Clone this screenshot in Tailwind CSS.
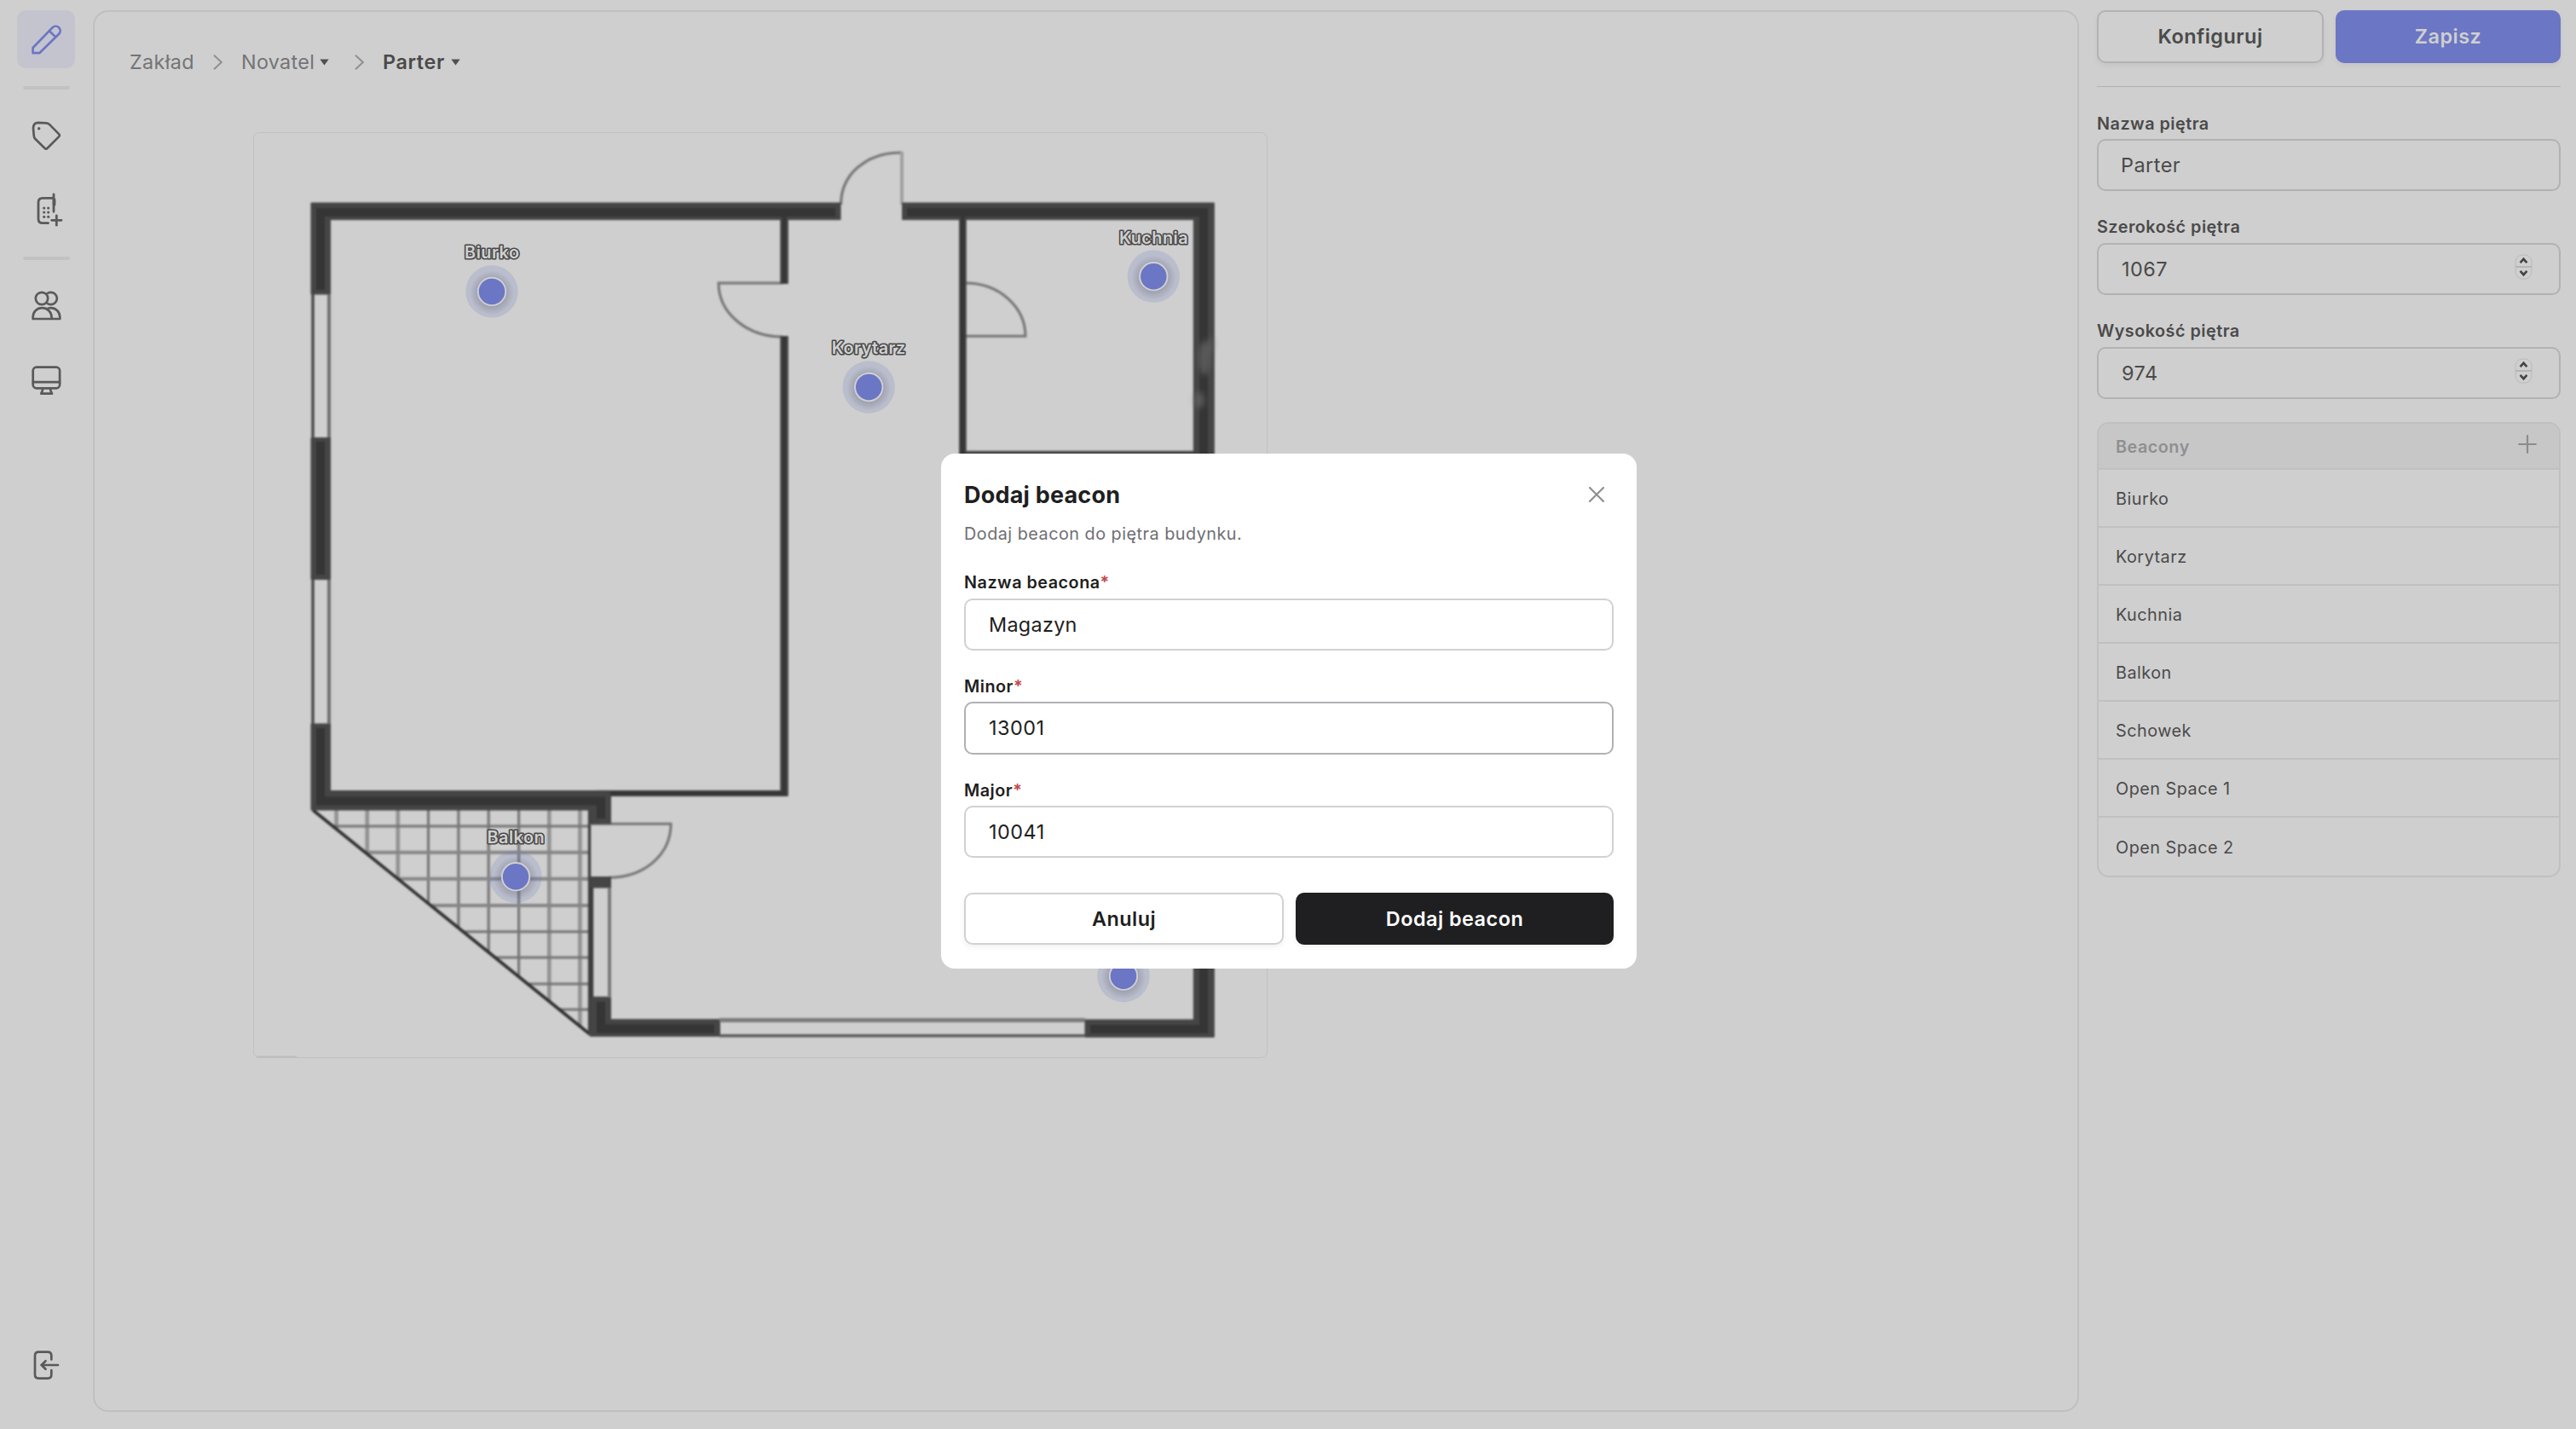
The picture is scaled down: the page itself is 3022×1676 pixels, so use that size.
<!DOCTYPE html>
<html lang="pl">
<head>
<meta charset="utf-8">
<title>Parter</title>
<script src="https://cdn.jsdelivr.net/npm/@tailwindcss/browser@4"></script>
</head>
<body class="relative flex h-[1676px] w-[3022px] overflow-hidden bg-[#cfcfcf] font-['Inter',sans-serif] text-[19.8px] tracking-[0.5px] text-[#4a4a4a]">

<!-- Sidebar -->
<nav class="mr-px flex w-[108px] shrink-0 flex-col items-center pt-3 pb-[41px] text-[#5a5a5a]">
  <a class="flex size-[68px] items-center justify-center rounded-[10px] bg-[#c4c4cf] text-[#6b76c4]">
    <svg class="size-9" viewBox="0 0 36 36" fill="none" stroke="currentColor" stroke-width="2.7" stroke-linejoin="round" stroke-linecap="round"><path d="M2.6 34.2V28L25.5 4.4a5.3 5.3 0 0 1 7.7 7.3L10.3 34.2Z"/><path d="M21.8 8.2l7.4 7.2"/></svg>
  </a>
  <div class="mt-[21px] h-1 w-[55px] rounded-full bg-[#c2c2c2]"></div>
  <a class="mt-5 flex size-[68px] items-center justify-center">
    <svg class="size-9" viewBox="0 0 36 36" fill="none" stroke="currentColor" stroke-width="2.7" stroke-linejoin="round"><path d="M9 2.8L18.5 3.4Q20.8 3.7 22.2 5.1L33 16.1Q34.6 17.8 33 19.4L19.6 32.8Q18 34.4 16.4 32.8L5.4 22Q4 20.6 3.8 18.4L3 9.6Q2.9 2.9 9 2.8Z"/><circle cx="9.7" cy="9.7" r="1.7" fill="currentColor" stroke="none"/></svg>
  </a>
  <a class="mt-[19px] flex size-[68px] items-center justify-center">
    <svg class="ml-[3px] h-10 w-9" viewBox="0 0 36 40" fill="none" stroke="currentColor" stroke-width="2.8" stroke-linecap="round"><path d="M24 6.3H12Q7 6.3 7 11.3V30.7Q7 35.7 12 35.7H18.5M25 2V22.3M28.3 26.8v11.4M22.6 32.3h11.4"/><path d="M25.6 8v6" stroke-width="3.6"/><g fill="currentColor" stroke="none"><circle cx="13.7" cy="18" r="1.6"/><circle cx="18.7" cy="18" r="1.6"/><circle cx="13.7" cy="23" r="1.6"/><circle cx="18.7" cy="23" r="1.6"/><circle cx="13.7" cy="28.3" r="1.6"/><circle cx="18.7" cy="28.3" r="1.6"/></g></svg>
  </a>
  <div class="mt-[21px] h-1 w-[55px] rounded-full bg-[#c2c2c2]"></div>
  <a class="mt-[19px] flex size-[68px] items-center justify-center">
    <svg class="size-9" viewBox="0 0 36 36" fill="none" stroke="currentColor" stroke-width="2.7" stroke-linejoin="round"><circle cx="13" cy="10" r="7.2"/><path d="M19 4.5A7.2 7.2 0 1 1 19 15.5"/><path d="M2.6 34V32C2.6 25.5 7.3 21.2 13.4 21.2S24.4 25.5 24.6 32V34Z"/><path d="M18.8 22.6C20.2 21.6 21.8 21.2 23.4 21.2C29.6 21.2 34.2 25.5 34.3 32V34H24.6"/></svg>
  </a>
  <a class="mt-5 flex size-[68px] items-center justify-center">
    <svg class="size-9" viewBox="0 0 36 36" fill="none" stroke="currentColor" stroke-width="2.7" stroke-linejoin="round" stroke-linecap="round"><rect x="2.7" y="2.7" width="31.4" height="24.6" rx="4"/><path d="M2.7 20.2H34.1M14.2 27.5C14.2 30 13.6 31.6 12.2 33.7H25C23.6 31.6 23 30 23 27.5"/></svg>
  </a>
  <a class="mt-auto flex size-[68px] items-center justify-center">
    <svg class="size-9" viewBox="0 0 36 36" fill="none" stroke="currentColor" stroke-width="2.7" stroke-linejoin="round" stroke-linecap="round"><path d="M24.3 11.5V7Q24.3 2.7 20 2.7H9.3Q5 2.7 5 7V29.3Q5 33.6 9.3 33.6H20Q24.3 33.6 24.3 29.3V24M32 18H12.5M17.5 13.2L12.7 18L17.5 22.8"/></svg>
  </a>
</nav>

<!-- Floor canvas -->
<main class="relative mt-3 h-[1644px] w-[2330px] shrink-0 rounded-[18px] border-2 border-[#c0c0c0]">
  <div class="flex items-center pt-[44px] pl-[41px] text-[23.4px] leading-[30px] text-[#747476]">
    <span class="w-[98px] tracking-[0.35px]">Zakład</span>
    <svg class="h-[18px] w-[11px]" viewBox="0 0 11 18" fill="none" stroke="#8f8f92" stroke-width="2"><path d="M1 .8L9.8 9L1 17.2"/></svg>
    <span class="ml-[22px] w-[92px] tracking-[0.3px]">Novatel</span>
    <svg class="h-2 w-[11px]" viewBox="0 0 11 8" fill="#505050"><path d="M.3.6H10.7L5.5 7.6Z"/></svg>
    <svg class="ml-[30px] h-[18px] w-[11px]" viewBox="0 0 11 18" fill="none" stroke="#8f8f92" stroke-width="2"><path d="M1 .8L9.8 9L1 17.2"/></svg>
    <span class="ml-[22px] w-[80px] font-semibold tracking-[0.6px] text-[#4a4a4a]">Parter</span>
    <svg class="h-2 w-[11px]" viewBox="0 0 11 8" fill="#505050"><path d="M.3.6H10.7L5.5 7.6Z"/></svg>
  </div>

  <!-- Plan: user units are page pixels -->
  <svg class="absolute top-[141px] left-[186px] h-[1086px] w-[1190px]" viewBox="297 155 1190 1086">
    <defs>
      <clipPath id="balcony"><path d="M366 950L692 1213V950Z"/></clipPath>
    </defs>
    <rect x="297.5" y="155.5" width="1189" height="1085" rx="7" fill="none" stroke="#c0c0c0"/>
    <path d="M301 1239.3H348" stroke="#bcbcbc" stroke-width="1.5"/>
    <g class="blur-[1.1px]">
      <g clip-path="url(#balcony)" fill="none" stroke="#8a8a8a" stroke-width="4">
        <path d="M394.6 950V1215M430.7 950V1215M466.8 950V1215M644.3 950V1215M680.4 950V1215" stroke-width="4.6" stroke="#929292"/>
        <path d="M502.5 950V1215M537.9 950V1215M573.2 950V1215M608.6 950V1215" stroke="#787878" stroke-width="3.2"/>
        <path d="M366 999.7H692M366 1030.7H692M366 1062H692" stroke="#868686" stroke-width="4"/>
        <path d="M366 969H692M366 1092.7H692M366 1123H692M366 1154H692M366 1184H692" stroke="#757575" stroke-width="3"/>
      </g>
      <path d="M367 950L692 1213" stroke="#303030" stroke-width="3.6"/>
      <path d="M691.5 950V1213" stroke="#404040" stroke-width="3.4"/>
      <!-- door leaves and swings -->
      <g fill="none" stroke="#757575" stroke-width="3">
        <path d="M918 332H843C843 368 877 395 918 395"/>
        <path d="M986.5 240C986.5 205 1015 179 1058 179" stroke-width="3.2"/>
        <path d="M1058 178V240" stroke="#a0a0a0" stroke-width="4"/>
        <path d="M1133 394.3H1203C1203 360 1172 332 1133 332"/>
        <path d="M692 966.3H787C787 1003 755 1029.3 714 1029.3"/>
      </g>
      <!-- exterior and partition walls -->
      <g fill="#454545" stroke="#454545" stroke-width="1">
        <path d="M365 238H986V257.6H387.6V345H365Z"/>
        <path d="M1058.6 238H1424.3V1216.3H1273V1196H1400.3V257.6H1058.6Z"/>
        <path d="M365 513.5H387.6V679.5H365Z"/>
        <path d="M365 849H387.6V927.5H716.4V966H692V950H365Z"/>
        <path d="M692 1028.5H716.4V1041H692Z"/>
        <path d="M692 1169.3H716.4V1195.7H844.5V1215.3H692Z"/>
        <path d="M915.8 250H924.3V332.5H915.8ZM915.8 394.5H924.3V933.6H700V927.4H915.8Z"/>
        <path d="M1125.6 250H1133.2V540H1125.6ZM1130 529.3H1402V536H1130Z"/>
      </g>
      <g fill="none" stroke="#353535" stroke-width="10">
        <path d="M980 249H376V340M1064 249H1412V1207H1279M376 518V674M376 854V939.5H705V960M705 1175V1206.5H838" stroke-linejoin="miter"/>
        <path d="M920 250V332M920 395V930.5H716M1129.4 250V540" stroke-width="4.5"/>
      </g>
      <!-- windows -->
      <g fill="none">
        <path d="M367 345V513M367 680V849" stroke="#484848" stroke-width="3.4"/>
        <path d="M386 345V513M386 680V849" stroke="#707070" stroke-width="4"/>
        <path d="M694 1041V1170" stroke="#3e3e3e" stroke-width="4.4"/>
        <path d="M715 1041V1170" stroke="#7a7a7a" stroke-width="4"/>
        <path d="M844 1196.6H1273" stroke="#7c7c7c" stroke-width="5"/>
        <path d="M844 1214.8H1273" stroke="#5c5c5c" stroke-width="3.6"/>
      </g>
      <g class="blur-[3px]" fill="#6a6a6a">
        <ellipse cx="1413" cy="420" rx="7" ry="20" opacity=".7"/>
        <ellipse cx="1420" cy="404" rx="4" ry="10" opacity=".4"/>
        <ellipse cx="1407" cy="469" rx="6" ry="10" opacity=".65"/>
      </g>
    </g>

    <defs>
      <radialGradient id="shade"><stop offset=".6" stop-color="#55555f" stop-opacity=".28"/><stop offset="1" stop-color="#55555f" stop-opacity="0"/></radialGradient>
      <g id="beacon">
        <circle r="30.7" fill="#6b76c4" fill-opacity=".2"/>
        <circle cy="1.5" r="26" fill="url(#shade)"/>
        <circle r="16.2" fill="#6b76c4" stroke="#d0d0d3" stroke-width="1.9"/>
      </g>
    </defs>
    <use href="#beacon" x="577" y="341.9"/>
    <use href="#beacon" x="1353.3" y="324.2"/>
    <use href="#beacon" x="1019.2" y="454"/>
    <use href="#beacon" x="605" y="1028.2"/>
    <use href="#beacon" x="1318" y="1144.7"/>
    <g class="text-[19.8px] font-semibold tracking-[0.5px]" fill="#d0d0d0" stroke="#484848" stroke-width="3.2" stroke-linejoin="round" paint-order="stroke" text-anchor="middle">
      <text x="577.3" y="302.8">Biurko</text>
      <text x="1353.5" y="285.8">Kuchnia</text>
      <text x="1019.2" y="415.2">Korytarz</text>
      <text x="605.3" y="989">Balkon</text>
    </g>
  </svg>
</main>

<!-- Floor properties -->
<aside class="ml-[21px] flex w-[544px] shrink-0 flex-col pt-3">
  <div class="flex gap-3.5 text-[23.4px] font-semibold">
    <button class="h-[62px] w-[266px] rounded-[10px] border-2 border-[#b2b2b2] shadow-[0_3px_6px_rgba(0,0,0,0.05)]">Konfiguruj</button>
    <button class="h-[62px] w-[264px] rounded-[10px] bg-[#6b76c4] text-[#cfcfcf] shadow-[0_3px_6px_rgba(0,0,0,0.05)]">Zapisz</button>
  </div>
  <div class="mt-[27px] h-px bg-[#b2b2b2]"></div>

  <label class="mt-[31px] h-6 font-semibold leading-6">Nazwa piętra</label>
  <div class="mt-1.5 flex h-[61px] items-center rounded-[10px] border-2 border-[#b2b2b2] pl-[26px] text-[23.4px]">Parter</div>

  <label class="mt-[30px] h-6 font-semibold leading-6">Szerokość piętra</label>
  <div class="mt-[7px] flex h-[61px] items-center justify-between rounded-[10px] border-2 border-[#b2b2b2] pr-[31px] pl-[27px] text-[23.4px]">1067
    <svg class="mb-[5px] h-[30px] w-[21px]" viewBox="0 0 21 30" fill="none"><rect x="1" y="1" width="19" height="28" rx="8" stroke="#bababa"/><path d="M1 15H20" stroke="#b6b6b6" stroke-width="2"/><path d="M6.6 10.2L10.5 5.8L14.4 10.2M6.6 19.8L10.5 24.2L14.4 19.8" stroke="#444" stroke-width="2.6"/></svg>
  </div>

  <label class="mt-[30px] h-6 font-semibold leading-6">Wysokość piętra</label>
  <div class="mt-[7px] flex h-[61px] items-center justify-between rounded-[10px] border-2 border-[#b2b2b2] pr-[31px] pl-[27px] text-[23.4px]">974
    <svg class="mb-[5px] h-[30px] w-[21px]" viewBox="0 0 21 30" fill="none"><rect x="1" y="1" width="19" height="28" rx="8" stroke="#bababa"/><path d="M1 15H20" stroke="#b6b6b6" stroke-width="2"/><path d="M6.6 10.2L10.5 5.8L14.4 10.2M6.6 19.8L10.5 24.2L14.4 19.8" stroke="#444" stroke-width="2.6"/></svg>
  </div>

  <div class="mt-[27px] h-[534px] divide-y-2 divide-[#c0c0c0] overflow-hidden rounded-[14px] border-2 border-[#c0c0c0]">
    <div class="flex h-[54px] items-center justify-between bg-[#c7c7c7] pt-1 pr-[26px] pl-5 font-semibold text-[#8f8f92]">Beacony
      <svg class="mb-[8px] size-[22px]" viewBox="0 0 22 22" stroke="#8c8c8e" stroke-width="2.2" stroke-linecap="round"><path d="M11 1.2V20.8M1.2 11H20.8"/></svg>
    </div>
    <div class="flex h-[68px] items-center pt-1 pl-5">Biurko</div>
    <div class="flex h-[68px] items-center pt-1 pl-5">Korytarz</div>
    <div class="flex h-[68px] items-center pt-1 pl-5">Kuchnia</div>
    <div class="flex h-[68px] items-center pt-1 pl-5">Balkon</div>
    <div class="flex h-[68px] items-center pt-1 pl-5">Schowek</div>
    <div class="flex h-[68px] items-center pt-1 pl-5">Open Space 1</div>
    <div class="flex h-[68px] items-center pt-1 pl-5">Open Space 2</div>
  </div>
</aside>

<!-- Add-beacon dialog -->
<div class="absolute top-[532px] left-[1104px] flex h-[604px] w-[816px] flex-col rounded-2xl bg-white px-[27px] pt-[31px] text-[#1f1f21]">
  <div class="flex items-center justify-between pr-[11px]">
    <h2 class="text-[27px] leading-9 font-bold tracking-[0.2px]">Dodaj beacon</h2>
    <svg class="mb-0.5 size-[18px]" viewBox="0 0 18 18" stroke="#8e8e93" stroke-width="2.2" stroke-linecap="round"><path d="M1 1L17 17M17 1L1 17"/></svg>
  </div>
  <p class="mt-[15px] h-6 leading-6 text-[#6e6e73]">Dodaj beacon do piętra budynku.</p>

  <label class="mt-[33px] h-6 font-semibold leading-6">Nazwa beacona<span class="text-[#c4474b]">*</span></label>
  <div class="mt-[7px] flex h-[61px] items-center rounded-[10px] border-2 border-[#d1d1d3] pl-[27px] text-[23.4px] tracking-[0.3px]">Magazyn</div>
  <label class="mt-[30px] h-6 font-semibold leading-6">Minor<span class="text-[#c4474b]">*</span></label>
  <div class="mt-1.5 flex h-[62px] items-center rounded-[10px] border-2 border-[#b0b0b5] pl-[27px] text-[23.4px]">13001</div>
  <label class="mt-[30px] h-6 font-semibold leading-6">Major<span class="text-[#c4474b]">*</span></label>
  <div class="mt-1.5 flex h-[61px] items-center rounded-[10px] border-2 border-[#d1d1d3] pl-[27px] text-[23.4px]">10041</div>

  <div class="mt-[41px] flex gap-3.5 text-[23.4px] font-semibold">
    <button class="h-[61px] w-[375px] rounded-[10px] border-2 border-[#d1d1d3] shadow-[0_3px_6px_rgba(0,0,0,0.06)]">Anuluj</button>
    <button class="h-[61px] w-[373px] rounded-[10px] bg-[#1f1f21] text-white shadow-[0_3px_6px_rgba(0,0,0,0.06)]">Dodaj beacon</button>
  </div>
</div>
</body>
</html>
